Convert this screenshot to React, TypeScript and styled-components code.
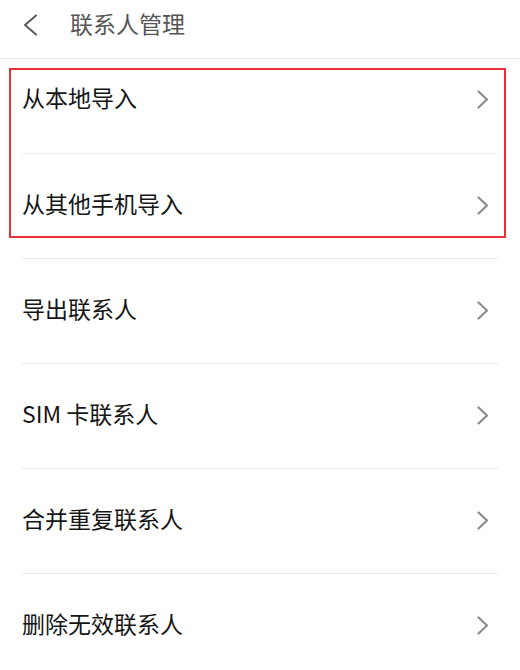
import React from 'react'
import styled, { createGlobalStyle } from 'styled-components'

const GlobalStyle = createGlobalStyle`
    html, body {
        margin: 0;
        padding: 0;
        background: #ffffff;
    }
    body {
        font-family: "Noto Sans CJK SC", "Noto Sans", sans-serif;
    }
`

const items = ['从本地导入', '从其他手机导入', '导出联系人', 'SIM 卡联系人', '合并重复联系人', '删除无效联系人']

export default function App() {
  return (
    <>
      <GlobalStyle />
      <Screen>
        <Header>
          <BackButton>
            <svg width="16" height="22" viewBox="0 0 16 22" fill="none">
              <path d="M14 1.5 L3 11 L14 20.5" stroke="#5a5a5a" strokeWidth="2" strokeLinecap="round" strokeLinejoin="round" />
            </svg>
          </BackButton>
          <Title>联系人管理</Title>
        </Header>
        <List>
          {items.map((label, i) => (
            <Row key={label} first={i === 0}>
              <Label>{label}</Label>
              <Chevron>
                <svg width="12" height="19" viewBox="0 0 12 19" fill="none">
                  <path d="M1.5 1.5 L10 9.5 L1.5 17.5" stroke="#8c8c8c" strokeWidth="2.2" strokeLinecap="round" strokeLinejoin="round" />
                </svg>
              </Chevron>
            </Row>
          ))}
          <Highlight />
        </List>
      </Screen>
    </>
  )
}

const Screen = styled.div`
    width: 520px;
    height: 670px;
    overflow: hidden;
    background: #ffffff;
`

const Header = styled.div`
    height: 58px;
    display: flex;
    flex-direction: row;
    align-items: center;
    border-bottom: 1px solid #ebebeb;
    box-sizing: content-box;
`

const BackButton = styled.div`
    width: 16px;
    height: 22px;
    margin-left: 22px;
    margin-top: -8px;
    display: flex;
`

const Title = styled.h1`
    margin: -12px 0 0 32px;
    font-size: 23px;
    font-weight: 400;
    color: #555555;
    line-height: 1;
`

const List = styled.div`
    position: relative;
`

// the first row sits right under the header, so it is shorter than the rest
const Row = styled.div<{ first?: boolean }>`
    height: ${p => (p.first ? '94px' : '105px')};
    padding-bottom: ${p => (p.first ? '17px' : '5px')};
    box-sizing: border-box;
    margin: 0 22px;
    display: flex;
    flex-direction: row;
    align-items: center;
    justify-content: space-between;
    border-top: ${p => (p.first ? 'none' : '1px solid #ececec')};
`

const Label = styled.span`
    font-size: 23px;
    color: #151515;
    line-height: 1;
`

const Chevron = styled.span`
    display: flex;
    margin-right: 9px;
    margin-top: 4px;
`

const Highlight = styled.div`
    position: absolute;
    left: 9px;
    top: 9px;
    width: 497px;
    height: 170px;
    box-sizing: border-box;
    border: 2px solid #e5323a;
    pointer-events: none;
`
